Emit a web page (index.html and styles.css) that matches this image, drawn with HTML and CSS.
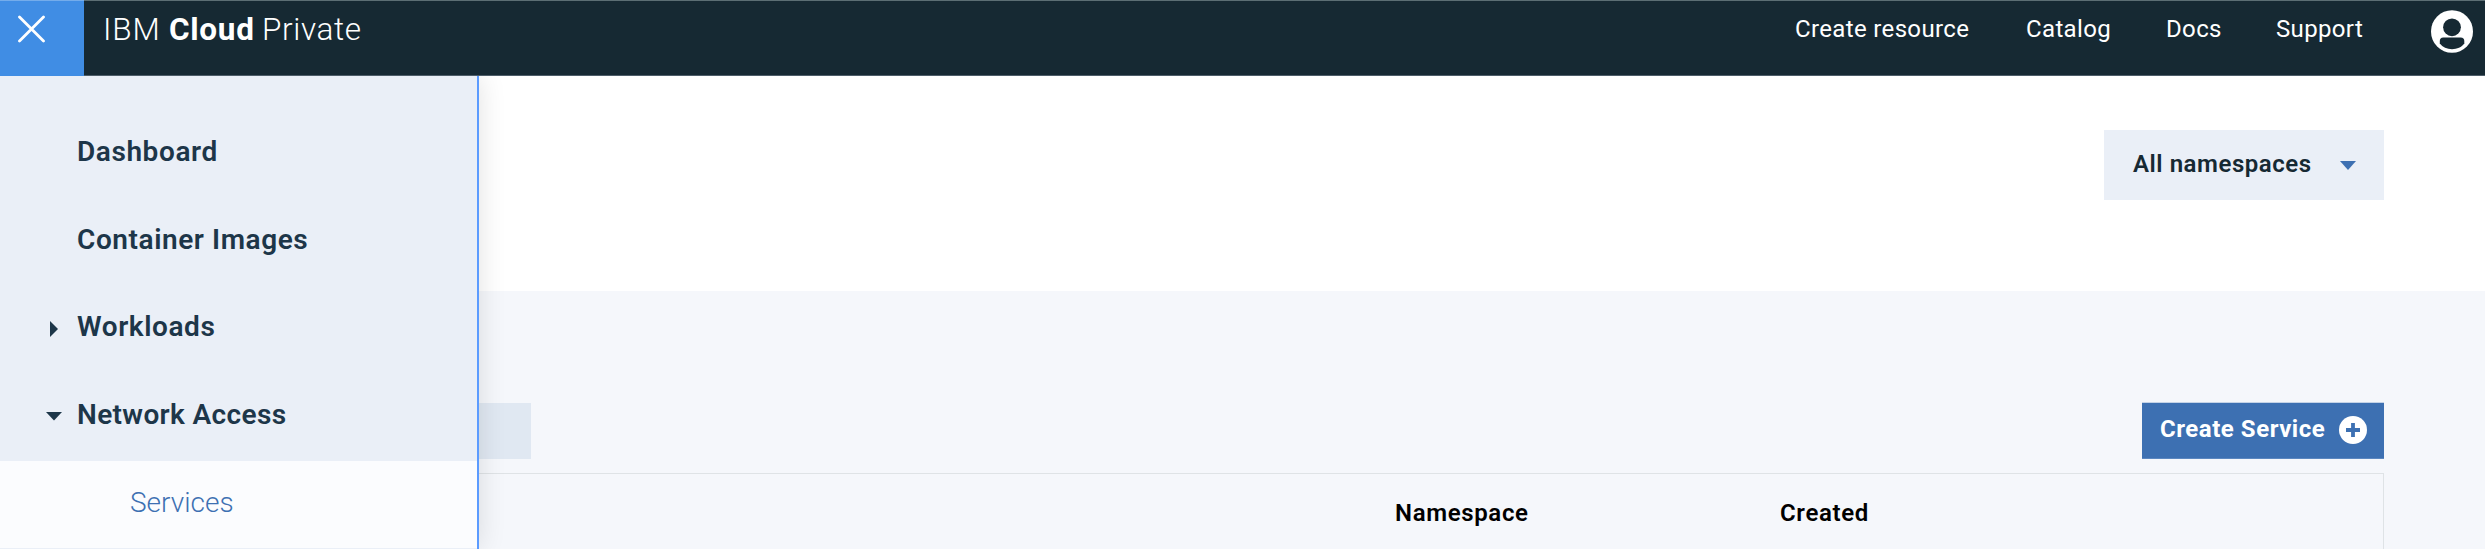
FILE: index.html
```html
<!DOCTYPE html>
<html lang="en">
<head>
<meta charset="utf-8">
<title>IBM Cloud Private</title>
<link rel="stylesheet" href="styles.css">
</head>
<body>
<header class="header">
  <button class="menu-toggle" aria-label="Close menu">
    <svg width="28" height="28" viewBox="0 0 28 28"><path d="M2.500 2L26.500 26M26.500 2L2.500 26" stroke="#fff" stroke-width="2.800" stroke-linecap="round"/></svg>
  </button>
  <div class="brand"><span class="brand-ibm">IBM</span><b class="brand-cloud">Cloud</b><span class="brand-private">Private</span></div>
  <nav class="top-nav">
    <a class="nav-create">Create resource</a>
    <a class="nav-catalog">Catalog</a>
    <a class="nav-docs">Docs</a>
    <a class="nav-support">Support</a>
  </nav>
  <svg class="avatar" width="42" height="43" viewBox="0 0 42 43">
    <ellipse cx="21" cy="21.5" rx="21" ry="21.3" fill="#fff"/>
    <circle cx="21" cy="17.3" r="8.9" fill="#162933"/>
    <path d="M12.3 27.5H29.7Q33.3 27.5 33.3 31V33.5C30.6 37.2 26 39.2 21 39.2S11.600 37.2 8.800 33.500V31Q8.800 27.500 12.300 27.500Z" fill="#162933"/>
  </svg>
</header>
<div class="body">
  <aside class="sidebar">
    <a class="side-item"><span class="side-icon"></span><span class="label">Dashboard</span></a>
    <a class="side-item"><span class="side-icon"></span><span class="label">Container Images</span></a>
    <a class="side-item"><span class="side-icon"><svg width="16" height="16" viewBox="0 0 16 16"><path d="M4 0L12 8L4 16Z" fill="#1d3649"/></svg></span><span class="label">Workloads</span></a>
    <a class="side-item"><span class="side-icon"><svg width="16" height="16" viewBox="0 0 16 16"><path d="M0 4H16L8 12.500Z" fill="#1d3649"/></svg></span><span class="label label-network">Network Access</span></a>
    <a class="side-sub"><span>Services</span></a>
  </aside>
  <main class="main">
    <section class="filter-bar">
      <button class="select"><span class="select-text">All namespaces</span><svg width="16" height="9" viewBox="0 0 16 9"><path d="M0 0H16L8 9Z" fill="#3d70b2"/></svg></button>
    </section>
    <section class="content">
      <div class="toolbar">
        <div class="search"></div>
        <button class="create"><span class="create-text">Create Service</span><svg width="28" height="28" viewBox="0 0 28 28"><circle cx="14" cy="14" r="14" fill="#fff"/><path d="M14 7V21M7 14H21" stroke="#3d70b2" stroke-width="3.8"/></svg></button>
      </div>
      <div class="table">
        <div class="th-namespace">Namespace</div>
        <div class="th-created">Created</div>
      </div>
    </section>
  </main>
</div>
</body>
</html>
```
FILE: styles.css
```css
* { box-sizing: border-box; }
body { margin: 0; width: 2485px; height: 549px; overflow: hidden; font-family: Roboto, "Liberation Sans", sans-serif; background: #f5f7fb; }
button { border: 0; margin: 0; padding: 0; font: inherit; }
svg { display: block; flex: none; }
span, b, a { white-space: nowrap; }

.header { height: 76px; display: flex; align-items: flex-start; background: #162933; color: #fff; border-top: 1px solid #5c6e74; border-bottom: 1px solid #4d5d69; }
.menu-toggle { width: 84px; height: 76px; margin-top: -1px; padding: 14px 0 0 17px; background: #408de4; border-top: 1px solid #74aceb; flex: none; display: flex; align-items: flex-start; }
.brand { display: flex; margin-left: 19px; padding-top: 9px; width: 1692px; font-size: 31.500px; line-height: 39px; font-weight: 300; }
.brand-ibm { width: 66px; letter-spacing: .9px; }
.brand-cloud { width: 93px; font-weight: 700; letter-spacing: .7px; }
.brand-private { letter-spacing: .6px; }
.top-nav { display: flex; width: 636px; padding-top: 13px; font-size: 24px; line-height: 30px; letter-spacing: .35px; }
.nav-create { width: 231px; }
.nav-catalog { width: 140px; }
.nav-docs { width: 110px; }
.avatar { margin-top: 9px; }

.body { display: flex; height: 473px; }
.sidebar { width: 479px; flex: none; padding-top: 34px; border-right: 2px solid #5b9bff; background: #eaeff7; box-shadow: 0 0 26px rgba(0,0,0,.12); clip-path: inset(0 -30px 0 0); z-index: 1; }
.side-item { display: flex; align-items: center; height: 87.500px; padding-left: 46px; font-size: 28px; font-weight: 600; color: #1d3649; letter-spacing: .58px; }
.label { padding-bottom: 4px; }
.label-network { letter-spacing: .36px; }
.side-icon { width: 31px; flex: none; }
.side-sub { display: flex; align-items: center; height: 87px; margin-top: 1px; padding: 0 0 4px 130px; font-size: 28px; font-weight: 300; color: #3d70b2; background: #fbfcfe; }

.main { flex: 1; display: flex; flex-direction: column; margin-left: -2px; }
.filter-bar { height: 215px; flex: none; display: flex; justify-content: flex-end; padding: 54px 101px 0 0; background: #fff; }
.select { width: 280px; height: 70px; display: flex; align-items: center; justify-content: space-between; padding: 0 28px 0 29px; background: #eaeff7; font-size: 24px; font-weight: 600; color: #162933; }
.select-text { padding-bottom: 3px; letter-spacing: .55px; }
.content { flex: 1; padding: 111px 101px 0 0; background: #f5f7fb; }
.toolbar { height: 57px; display: flex; justify-content: space-between; }
.search { width: 54px; height: 56px; margin-top: 1px; background: #e0e8f2; }
.create { width: 242px; height: 57px; display: flex; align-items: center; justify-content: space-between; padding: 0 17px 2px 18px; background: #3d70b2; border-top: 1px solid #c4d3e7; border-bottom: 1px solid #5b87c0; color: #fff; font-size: 24px; font-weight: 700; }
.create-text { padding-bottom: 1px; letter-spacing: .53px; }
.table { height: 76px; margin-top: 14px; display: flex; padding: 24px 0 0 918px; border: solid #dfe3e6; border-width: 1px 1px 0 0; font-size: 24px; line-height: 30px; font-weight: 600; color: #000; letter-spacing: .65px; }
.th-namespace { width: 385px; }
```
